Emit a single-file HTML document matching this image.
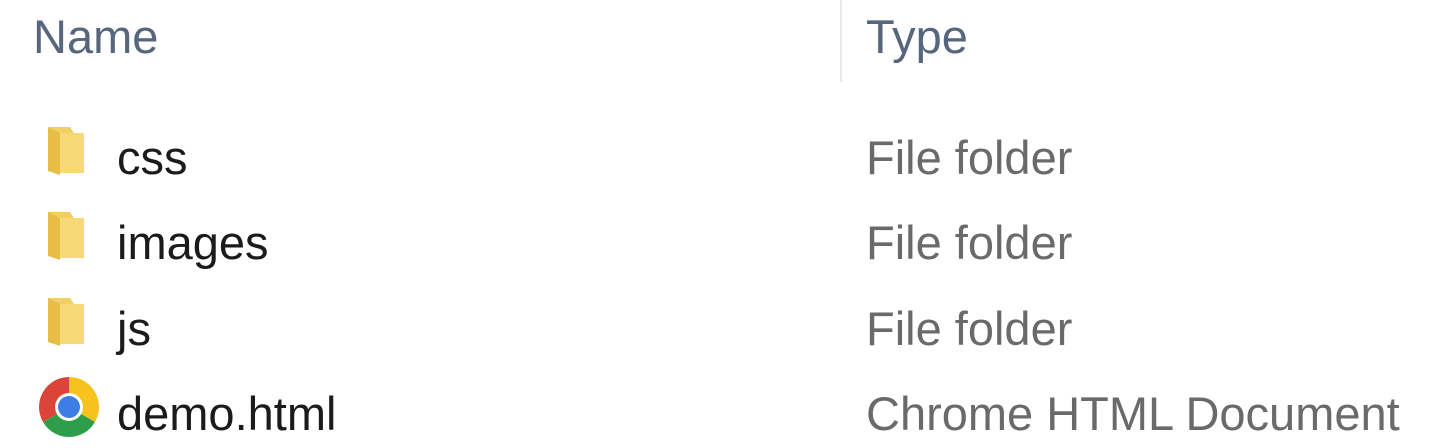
<!DOCTYPE html>
<html><head><style>
body{margin:0;width:1432px;height:448px;background:#fff;overflow:hidden;position:relative;font-family:"Liberation Sans",sans-serif;}
.t{position:absolute;font-size:47px;line-height:1;white-space:nowrap;}
.h{color:#56667c;}
.n{color:#1b1b1b;left:117px;}
.ty{color:#6a6a6a;left:866px;}
.div{position:absolute;left:840px;top:0;width:2px;height:82px;background:#e8e8e8;}
.fold{position:absolute;left:46px;width:40px;height:52px;}
</style></head><body>
<div class="t h" style="left:33px;top:13px;">Name</div>
<div class="div"></div>
<div class="t h" style="left:866px;top:13px;">Type</div>

<svg class="fold" style="top:125px" viewBox="0 0 40 52"><path d="M2 2h22l4 6v38H2z" fill="#f2cf63"/><path d="M2 2l12 6v42L2 46z" fill="#e8bd45"/><rect x="14" y="8" width="24" height="40" fill="#f8d978"/></svg>
<div class="t n" style="top:134px;">css</div>
<div class="t ty" style="top:134px;">File folder</div>

<svg class="fold" style="top:210px" viewBox="0 0 40 52"><path d="M2 2h22l4 6v38H2z" fill="#f2cf63"/><path d="M2 2l12 6v42L2 46z" fill="#e8bd45"/><rect x="14" y="8" width="24" height="40" fill="#f8d978"/></svg>
<div class="t n" style="top:219px;">images</div>
<div class="t ty" style="top:219px;">File folder</div>

<svg class="fold" style="top:296px" viewBox="0 0 40 52"><path d="M2 2h22l4 6v38H2z" fill="#f2cf63"/><path d="M2 2l12 6v42L2 46z" fill="#e8bd45"/><rect x="14" y="8" width="24" height="40" fill="#f8d978"/></svg>
<div class="t n" style="top:305px;">js</div>
<div class="t ty" style="top:305px;">File folder</div>

<svg style="position:absolute;left:37px;top:375px" width="64" height="64" viewBox="-32 -32 64 64">
<path d="M0 0 L0 -30 A30 30 0 0 1 25.98 15 Z" fill="#f6c21c"/>
<path d="M0 0 L25.98 15 A30 30 0 0 1 -25.98 15 Z" fill="#2f9e4a"/>
<path d="M0 0 L-25.98 15 A30 30 0 0 1 0 -30 Z" fill="#dc4437"/>
<circle r="14" fill="#fff"/><circle r="11" fill="#3d7ee6"/>
</svg>
<div class="t n" style="top:390px;">demo.html</div>
<div class="t ty" style="top:390px;">Chrome HTML Document</div>
</body></html>
